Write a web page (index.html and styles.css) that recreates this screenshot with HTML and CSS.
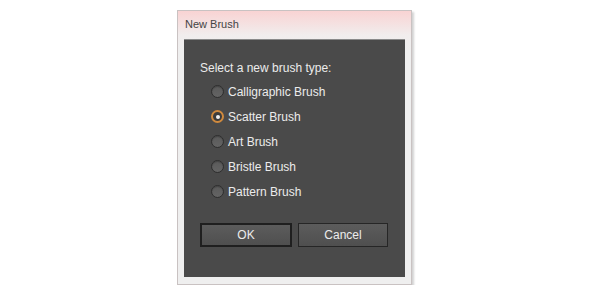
FILE: index.html
```html
<!DOCTYPE html>
<html lang="en">
<head>
    <meta charset="UTF-8">
    <title>New Brush</title>
    <link rel="stylesheet" href="styles.css">
</head>
<body>
    <div class="dialog">
        <div class="title">New Brush</div>

        <div class="panel">
            <p class="prompt">Select a new brush type:</p>

            <!-- brush types -->
            <div class="options">
                <label class="option"><span class="radio"></span>Calligraphic Brush</label>
                <label class="option"><span class="radio checked"></span>Scatter Brush</label>
                <label class="option"><span class="radio"></span>Art Brush</label>
                <label class="option"><span class="radio"></span>Bristle Brush</label>
                <label class="option"><span class="radio"></span>Pattern Brush</label>
            </div>

            <div class="buttons">
                <button class="btn btn-default">OK</button>
                <button class="btn">Cancel</button>
            </div>
        </div>
    </div>
</body>
</html>
```

FILE: styles.css
```css
* {
    margin: 0;
    padding: 0;
    box-sizing: border-box;
}

body {
    font-family: 'Liberation Sans', Arial, sans-serif;
    background: white;
    padding: 10px 0 0 177px;
}

.dialog {
    width: 235px;
    height: 275px;
    background: linear-gradient(180deg, #f9d3d3 0px, #f1eded 24px, #efefef 40px);
    border: 1px solid #c9c2c2;
    box-shadow: 2px 2px 2px rgba(0,0,0,0.18);
    display: flex;
    flex-direction: column;
}

.title {
    height: 28px;
    padding: 7px 0 0 7px;
    font-size: 11px;
    color: #444;
}

.panel {
    flex: 1;
    margin: 0 6px 7px 6px;
    background: #4a4a4a;
    border-top: 1px solid #8a8a8a;
    padding: 20px 0 0 16px;
    color: #ececec;
    font-size: 12px;
}

.prompt {
    line-height: 16px;
}

.options {
    display: flex;
    flex-direction: column;
    padding: 3px 0 0 11px;
}

.option {
    display: flex;
    align-items: center;
    gap: 4px;
    height: 25px;
}

.radio {
    width: 13px;
    height: 13px;
    border-radius: 50%;
    border: 1px solid #2e2e2e;
    background: linear-gradient(180deg, #5a5a5a, #646464);
    box-shadow: inset 0 1px 1px rgba(0,0,0,0.25);
    display: flex;
    align-items: center;
    justify-content: center;
}

.radio.checked {
    border: 2px solid #d08a3e;
    background: #3c3c3c;
    box-shadow: none;
}

.radio.checked::after {
    content: '';
    width: 4px;
    height: 4px;
    border-radius: 50%;
    background: #f2f2f2;
}

.buttons {
    display: flex;
    gap: 6px;
    margin-top: 19px;
}

.btn {
    width: 90px;
    height: 24px;
    font-family: inherit;
    font-size: 12px;
    color: #ececec;
    background: linear-gradient(180deg, #5c5c5c, #4f4f4f);
    border: 1px solid #262626;
}

.btn-default {
    width: 92px;
    border: 2px solid #1f1f1f;
}
```
